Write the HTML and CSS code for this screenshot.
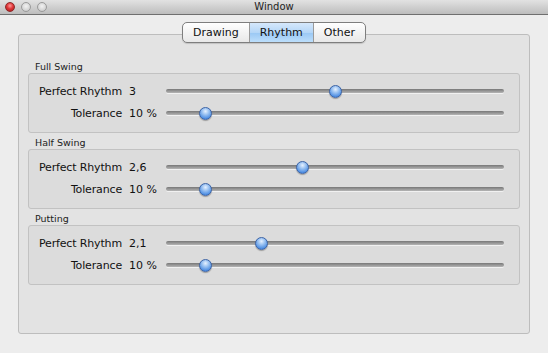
FILE: index.html
```html
<!DOCTYPE html>
<html>
<head>
<meta charset="utf-8">
<link rel="stylesheet" href="styles.css">
</head>
<body>
<div class="window">
  <div class="titlebar">
    <div class="lights">
      <span class="light red"></span>
      <span class="light gray"></span>
      <span class="light gray"></span>
    </div>
    <div class="title">Window</div>
  </div>
  <div class="content">
    <div class="tabview">
      <div class="tabs">
        <div class="tab">Drawing</div>
        <div class="tab selected">Rhythm</div>
        <div class="tab">Other</div>
      </div>

      <div class="group">
        <div class="group-label">Full Swing</div>
        <div class="group-box">
          <div class="row">
            <div class="label">Perfect Rhythm</div>
            <div class="value">3</div>
            <div class="slider"><div class="track"></div><div class="knob" style="--v:0.5"></div></div>
          </div>
          <div class="row">
            <div class="label">Tolerance</div>
            <div class="value">10 %</div>
            <div class="slider"><div class="track"></div><div class="knob" style="--v:0.1"></div></div>
          </div>
        </div>
      </div>

      <div class="group">
        <div class="group-label">Half Swing</div>
        <div class="group-box">
          <div class="row">
            <div class="label">Perfect Rhythm</div>
            <div class="value">2,6</div>
            <div class="slider"><div class="track"></div><div class="knob" style="--v:0.4"></div></div>
          </div>
          <div class="row">
            <div class="label">Tolerance</div>
            <div class="value">10 %</div>
            <div class="slider"><div class="track"></div><div class="knob" style="--v:0.1"></div></div>
          </div>
        </div>
      </div>

      <div class="group">
        <div class="group-label">Putting</div>
        <div class="group-box">
          <div class="row">
            <div class="label">Perfect Rhythm</div>
            <div class="value">2,1</div>
            <div class="slider"><div class="track"></div><div class="knob" style="--v:0.275"></div></div>
          </div>
          <div class="row">
            <div class="label">Tolerance</div>
            <div class="value">10 %</div>
            <div class="slider"><div class="track"></div><div class="knob" style="--v:0.1"></div></div>
          </div>
        </div>
      </div>
    </div>
  </div>
</div>
</body>
</html>
```
FILE: styles.css
```css
html, body {
  margin: 0;
  padding: 0;
  background: #ededed;
  font-family: "DejaVu Sans", Verdana, sans-serif;
  color: #111;
}

.window {
  width: 548px;
  height: 353px;
  background: #ededed;
  display: flex;
  flex-direction: column;
}

.titlebar {
  position: relative;
  height: 14px;
  border-bottom: 1px solid #6f6f6f;
  background: linear-gradient(#e2e2e2, #bdbdbd);
  display: flex;
  align-items: center;
  justify-content: center;
}

.lights {
  position: absolute;
  left: 5px;
  top: 2px;
  display: flex;
  gap: 6px;
}

.light {
  width: 10px;
  height: 10px;
  border-radius: 50%;
  box-sizing: border-box;
}

.light.red {
  background: radial-gradient(circle at 50% 35%, #ff9a9a 0%, #e0383a 45%, #a41416 100%);
  border: 1px solid #8c2a2a;
}

.light.gray {
  background: radial-gradient(circle at 50% 40%, #f2f2f2 0%, #d6d6d6 60%, #bdbdbd 100%);
  border: 1px solid #9a9a9a;
}

.title {
  font-size: 10px;
  line-height: 14px;
  color: #222;
}

.content {
  flex: 1;
  padding: 19px 18px 0 18px;
}

.tabview {
  height: 298px;
  border: 1px solid #bdbdbd;
  border-radius: 3px;
  background: #e3e3e3;
  padding: 0 9px;
  display: flex;
  flex-direction: column;
}

.tabs {
  align-self: center;
  margin-top: -13px;
  margin-bottom: 18px;
  height: 19px;
  display: flex;
  border: 1px solid #7e7e7e;
  border-radius: 5px;
  overflow: hidden;
  background: linear-gradient(#ffffff, #f3f3f3 50%, #e8e8e8);
  box-shadow: 0 1px 1px rgba(0,0,0,0.15);
}

.tab {
  font-size: 11px;
  line-height: 19px;
  padding: 0 10px;
  color: #111;
}

.tab + .tab {
  border-left: 1px solid #9a9a9a;
}

.tab.selected {
  background: linear-gradient(#d6e8fb, #b4d6f7 50%, #9ac8f4 52%, #bcdefb);
}

.group {
  display: flex;
  flex-direction: column;
  margin-bottom: 4px;
}

.group-label {
  font-size: 9.5px;
  line-height: 12px;
  padding-left: 7px;
  color: #222;
}

.group-box {
  border: 1px solid #c2c2c2;
  border-radius: 3px;
  background: #dcdcdc;
  padding: 6px 15px 8px 0;
  display: flex;
  flex-direction: column;
}

.row {
  height: 22px;
  display: flex;
  align-items: center;
}

.label {
  width: 93px;
  text-align: right;
  font-size: 11px;
  letter-spacing: -0.15px;
  margin-right: 7px;
  white-space: nowrap;
}

.value {
  width: 37px;
  font-size: 11px;
}

.slider {
  position: relative;
  flex: 1;
  height: 13px;
  display: flex;
  align-items: center;
}

.track {
  flex: 1;
  height: 4px;
  border-radius: 2px;
  background: linear-gradient(#777, #9c9c9c 60%, #b5b5b5);
  box-shadow: 0 1px 0 rgba(255,255,255,0.6);
}

.knob {
  position: absolute;
  top: 0;
  left: calc((100% - 13px) * var(--v));
  width: 13px;
  height: 13px;
  box-sizing: border-box;
  border-radius: 50%;
  border: 1px solid #3d64a6;
  background: radial-gradient(circle at 50% 30%, #e6f1ff 0%, #9cc3f2 35%, #4f8fe3 75%, #3a74cc 100%);
  box-shadow: 0 1px 1px rgba(0,0,0,0.3);
}
```
